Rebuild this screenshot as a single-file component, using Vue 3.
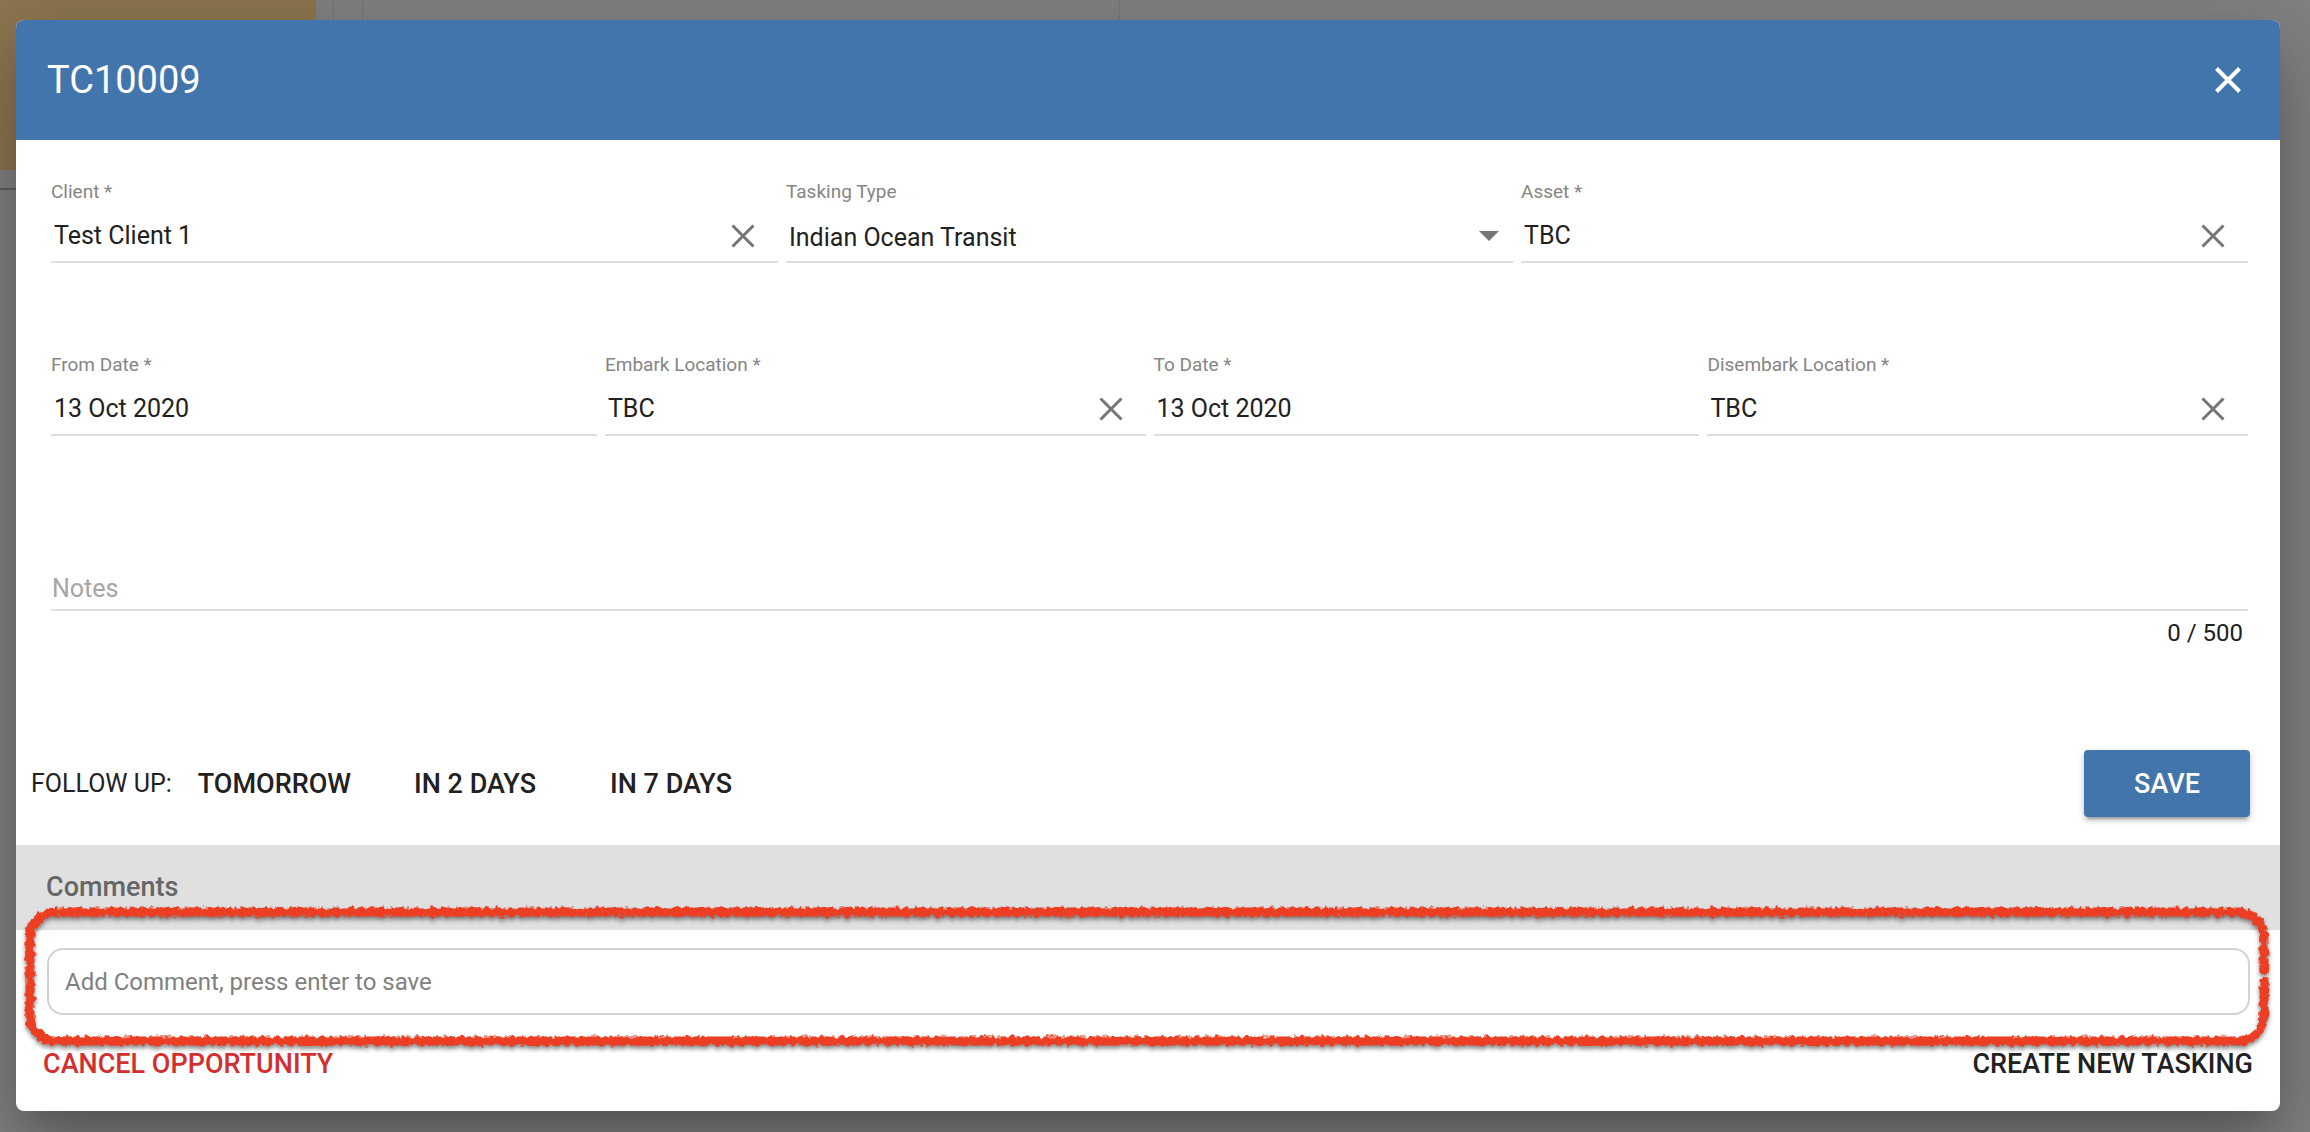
<template>
  <div class="page">
    <div class="board" aria-hidden="true">
      <div class="board-lane">
        <div class="board-card"></div>
      </div>
      <div class="board-gutter"></div>
      <div class="board-col"></div>
      <div class="board-col board-col-wide"></div>
    </div>

    <div class="overlay">
      <section class="dialog" role="dialog" aria-labelledby="dialog-title">
        <header class="dialog-header">
          <h1 id="dialog-title">TC10009</h1>
          <button class="btn-icon btn-close" aria-label="Close">
            <svg width="26" height="26" viewBox="0 0 26 26"><path d="M1.5 1.5L24.5 24.5M24.5 1.5L1.5 24.5" /></svg>
          </button>
        </header>

        <form class="form" @submit.prevent>
          <div v-for="(row, i) in rows" :key="i" class="row" :class="'row-' + row.length">
            <div v-for="field in row" :key="field.id" class="field">
              <label :for="field.id">{{ field.label }}</label>
              <div class="control">
                <select v-if="field.options" :id="field.id" v-model="field.value">
                  <option v-for="o in field.options" :key="o">{{ o }}</option>
                </select>
                <input v-else :id="field.id" v-model="field.value" type="text" />
                <svg v-if="field.options" class="caret" width="20" height="10" viewBox="0 0 20 10">
                  <path d="M0 0H20L10 10Z" />
                </svg>
                <button v-if="field.clearable" type="button" class="btn-icon" :aria-label="'Clear ' + field.label" @click="field.value = ''">
                  <svg width="24" height="24" viewBox="0 0 24 24"><path d="M1.5 1.5L22.5 22.5M22.5 1.5L1.5 22.5" /></svg>
                </button>
              </div>
            </div>
          </div>

          <div class="notes">
            <input v-model="notes" type="text" placeholder="Notes" aria-label="Notes" maxlength="500" />
            <span class="counter">{{ notes.length }} / 500</span>
          </div>
        </form>

        <div class="follow-up">
          <span class="follow-label">FOLLOW UP:</span>
          <div class="follow-options">
            <button v-for="f in followUps" :key="f" class="btn-text btn-follow">{{ f }}</button>
          </div>
          <button class="btn-save">SAVE</button>
        </div>

        <h2 class="comments-title">Comments</h2>
        <div class="comment-box">
          <input v-model="comment" type="text" placeholder="Add Comment, press enter to save" aria-label="Add Comment" @keyup.enter="comment = ''" />
          <svg class="marker" aria-hidden="true">
            <defs>
              <filter id="crayon" filterUnits="userSpaceOnUse" x="-20" y="-20" width="120%" height="180" color-interpolation-filters="sRGB">
                <feTurbulence type="fractalNoise" baseFrequency="0.2" numOctaves="2" seed="4" result="noise" />
                <feDisplacementMap in="SourceGraphic" in2="noise" scale="7" xChannelSelector="R" yChannelSelector="G" result="rough" />
                <feDropShadow in="rough" dx="0" dy="3" stdDeviation="2" flood-color="#000" flood-opacity="0.45" />
              </filter>
              <mask id="gap" maskUnits="userSpaceOnUse" x="-20" y="-20" width="120%" height="180">
                <rect class="mask-all" fill="#fff" />
                <rect class="mask-cut" fill="#000" />
              </mask>
            </defs>
            <g filter="url(#crayon)">
              <g mask="url(#gap)">
                <rect class="marker-line" rx="26" />
              </g>
            </g>
          </svg>
        </div>

        <footer class="dialog-footer">
          <button class="btn-text btn-danger">CANCEL OPPORTUNITY</button>
          <button class="btn-text">CREATE NEW TASKING</button>
        </footer>
      </section>
    </div>
  </div>
</template>

<script setup>
import { ref } from 'vue';

const rows = ref([
  [
    { id: 'client', label: 'Client *', value: 'Test Client 1', clearable: true },
    { id: 'type', label: 'Tasking Type', value: 'Indian Ocean Transit', options: ['Indian Ocean Transit'] },
    { id: 'asset', label: 'Asset *', value: 'TBC', clearable: true },
  ],
  [
    { id: 'from', label: 'From Date *', value: '13 Oct 2020' },
    { id: 'embark', label: 'Embark Location *', value: 'TBC', clearable: true },
    { id: 'to', label: 'To Date *', value: '13 Oct 2020' },
    { id: 'disembark', label: 'Disembark Location *', value: 'TBC', clearable: true },
  ],
]);
const followUps = ['TOMORROW', 'IN 2 DAYS', 'IN 7 DAYS'];
const notes = ref('');
const comment = ref('');
</script>

<style>
body {
  margin: 0;
  background: #828282;
}
</style>

<style scoped>
.page {
  position: relative;
  min-height: 100vh;
  font-family: Roboto, "Liberation Sans", sans-serif;
  font-size: 25px;
  color: #212121;
}
.board {
  position: absolute;
  inset: 0;
  display: flex;
  align-items: flex-start;
}
.board-lane {
  width: 316px;
  height: 188px;
  border-bottom: 2px solid #606060;
}
.board-card {
  height: 170px;
  background: #8d7650;
}
.board-gutter {
  width: 17px;
}
.board-col {
  box-sizing: border-box;
  width: 29px;
  height: 190px;
  border-left: 1px solid #767676;
}
.board-col-wide {
  width: 758px;
  border-right: 1px solid #767676;
}
.overlay {
  position: relative;
  padding: 20px 30px 21px 16px;
}
.dialog {
  background: #fff;
  border-radius: 8px;
  box-shadow:
    0 22px 30px -14px rgba(0, 0, 0, 0.2),
    0 48px 76px 6px rgba(0, 0, 0, 0.14),
    0 18px 92px 16px rgba(0, 0, 0, 0.12);
}
input,
select,
button {
  font: inherit;
  color: inherit;
  border: none;
  background: none;
  padding: 0;
  outline: none;
}
button {
  cursor: pointer;
}
.dialog-header {
  display: flex;
  align-items: center;
  justify-content: space-between;
  height: 120px;
  padding: 0 39px 0 31px;
  border-radius: 8px 8px 0 0;
  background: #4275ac;
  color: #fff;
}
h1 {
  margin: 0;
  font-size: 38px;
  font-weight: 400;
}
.btn-icon {
  display: flex;
  flex: none;
  color: #757575;
}
.btn-icon path {
  stroke: currentColor;
  stroke-width: 3;
  fill: none;
}
.btn-close {
  color: #fff;
}
.btn-close path {
  stroke-width: 4;
}
.form {
  padding: 40px 32px 0 35px;
}
.row {
  display: grid;
  gap: 8px;
  margin-bottom: 90px;
}
.row-3 {
  grid-template-columns: repeat(3, 1fr);
}
.row-4 {
  grid-template-columns: 101fr 100fr 101fr 100fr;
}
.field label {
  display: block;
  font-size: 19px;
  line-height: 24px;
  color: #858585;
}
.control {
  box-sizing: border-box;
  display: flex;
  align-items: center;
  height: 59px;
  padding: 6px 23px 0 3px;
  border-bottom: 2px solid #dedede;
}
.control input,
.control select {
  box-sizing: border-box;
  flex: 1;
  min-width: 0;
  height: 48px;
}
.control select {
  appearance: none;
  padding-top: 4px;
}
.caret {
  margin-right: -9px;
  fill: #757575;
}
.notes {
  display: flex;
  flex-direction: column;
  margin-top: 131px;
}
.notes input {
  height: 42px;
  padding-left: 1px;
  border-bottom: 2px solid #dedede;
}
.notes input::placeholder {
  color: #a6a6a6;
  opacity: 1;
}
.counter {
  align-self: flex-end;
  margin-top: 6px;
  padding-right: 5px;
  font-size: 24px;
  line-height: 32px;
}
.follow-up {
  display: flex;
  align-items: center;
  margin-top: 101px;
  padding: 0 30px 28px 15px;
}
.follow-options {
  display: flex;
  flex: 1;
}
.btn-text {
  font-size: 27px;
  font-weight: 500;
  line-height: 32px;
}
.btn-follow {
  min-width: 196px;
  padding: 0 26px;
}
.btn-save {
  width: 166px;
  height: 67px;
  border-radius: 4px;
  background: #4275ac;
  color: #fff;
  font-size: 27px;
  font-weight: 500;
  box-shadow:
    0 6px 2px -4px rgba(0, 0, 0, 0.2),
    0 4px 4px rgba(0, 0, 0, 0.14),
    0 2px 10px rgba(0, 0, 0, 0.12);
}
.comments-title {
  margin: 0;
  padding-left: 30px;
  background: #e0e0e0;
  color: #666;
  font-size: 27px;
  font-weight: 500;
  line-height: 85px;
}
.comment-box {
  position: relative;
  display: flex;
  padding: 18px 30px 33px 31px;
}
.comment-box input {
  box-sizing: border-box;
  flex: 1;
  height: 67px;
  padding: 0 16px;
  border: 2px solid #d2d2d2;
  border-radius: 16px;
  font-size: 24px;
}
.comment-box input::placeholder {
  color: #808080;
  opacity: 1;
}
/* hand-drawn highlight round the comment input */
.marker {
  position: absolute;
  top: -18px;
  left: 14px;
  width: calc(100% - 30px);
  height: 129px;
  overflow: visible;
  pointer-events: none;
}
.marker-line {
  width: 100%;
  height: 100%;
  fill: none;
  stroke: #ec3e22;
  stroke-width: 9px;
}
.mask-all {
  x: -20px;
  y: -20px;
  width: 120%;
  height: 180px;
}
.mask-cut {
  x: calc(100% - 12px);
  y: 61px;
  width: 24px;
  height: 4px;
}
.dialog-footer {
  display: flex;
  justify-content: space-between;
  padding: 0 27px 31px;
}
.btn-danger {
  color: #d32f2f;
}
</style>
